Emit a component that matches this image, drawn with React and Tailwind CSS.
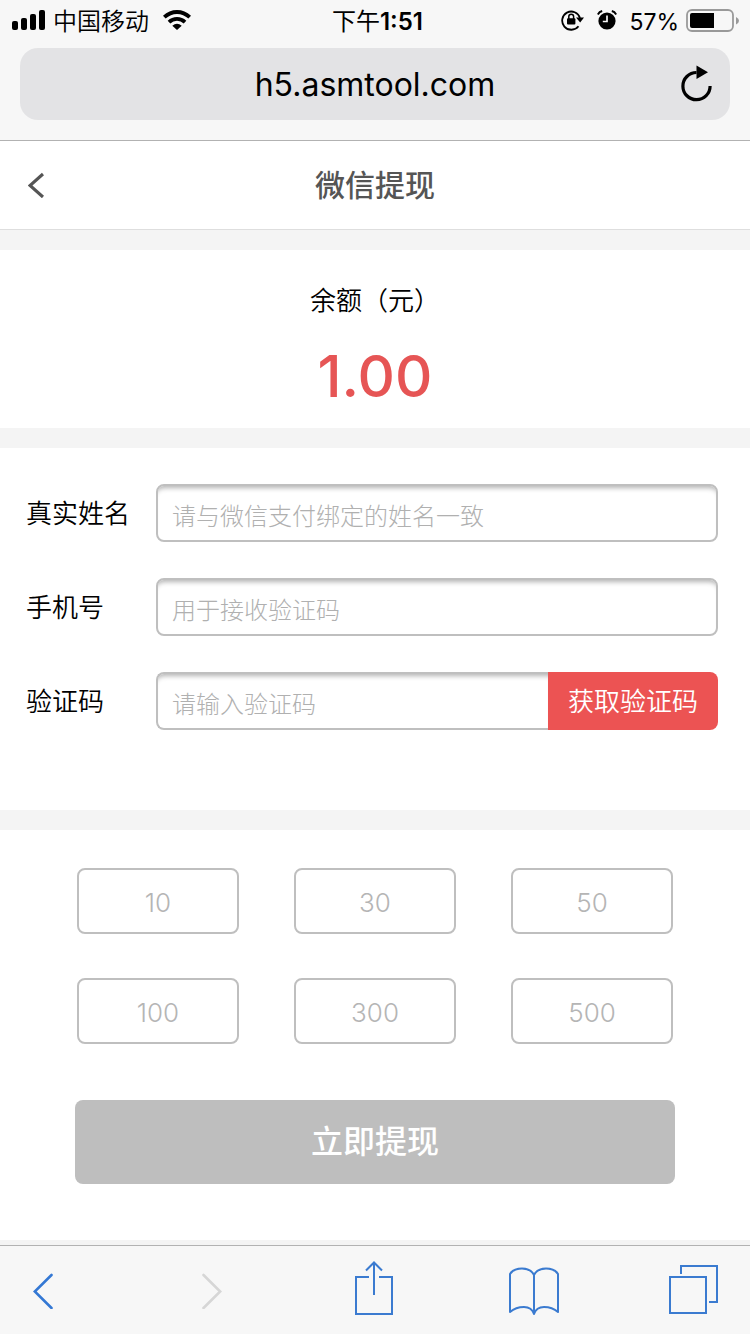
const fields = [
  { id: "name", label: "真实姓名", placeholder: "请与微信支付绑定的姓名一致" },
  { id: "phone", label: "手机号", placeholder: "用于接收验证码" },
  { id: "code", label: "验证码", placeholder: "请输入验证码", action: "获取验证码" },
];
const amounts = [10, 30, 50, 100, 300, 500];

function StatusBar() {
  return (
    <div className="grid h-10 grid-cols-[1fr_auto_1fr] items-center pr-[11px] pl-3 text-2xl leading-10 text-black">
      <div className="flex items-center">
        <svg width="33" height="22" viewBox="0 0 33 22" aria-hidden="true">
          <rect x="0" y="11" width="6" height="9" rx="2" />
          <rect x="9" y="8" width="6" height="12" rx="2" />
          <rect x="18" y="4" width="6" height="16" rx="2" />
          <rect x="27" y="0" width="6" height="20" rx="2" />
        </svg>
        <span className="ml-2 pt-0.5 font-[350]">中国移动</span>
        <svg className="ml-3.5" width="28" height="22" viewBox="0 0 28 22" aria-hidden="true">
          <g fill="none" stroke="#000" strokeWidth="3.8">
            <path d="M1.3 7.2Q6.8 2 14 2T26.7 7.2" />
            <path d="M6 12.1Q9.4 8.9 14 8.9T22 12.1" />
          </g>
          <path d="M9.3 15.7Q14 12 18.7 15.7L14 20Z" />
        </svg>
      </div>
      <div className="pt-0.5 pl-1 font-semibold">
        <span className="font-normal">下午</span>1:51
      </div>
      <div className="flex items-center justify-end">
        <svg width="24" height="24" viewBox="0 0 24 24" aria-hidden="true">
          <path d="M17.5 17.2A9.1 9.1 0 1 1 19 9" fill="none" stroke="#000" strokeWidth="1.8" />
          <path d="M15 8.6H23L19.2 13.4Z" />
          <rect x="6" y="9.2" width="8.4" height="6.2" rx="1" />
          <path d="M7.8 10V7.6a2.4 2.4 0 0 1 4.8 0v2.4" fill="none" stroke="#000" strokeWidth="1.5" />
        </svg>
        <svg className="ml-3" width="20" height="22" viewBox="0 0 20 22" aria-hidden="true">
          <circle cx="10" cy="11" r="8.6" />
          <path d="M.8 4.5Q2.3 1.7 5.2 1M19.2 4.5Q17.7 1.7 14.8 1" fill="none" stroke="#000" strokeWidth="2" />
          <path d="M10 5.5V11.5H5.8" fill="none" stroke="#f7f7f7" strokeWidth="1.7" />
        </svg>
        <span className="ml-3 pt-0.5 text-[23px]">57%</span>
        <svg className="ml-[7px]" width="53" height="24" viewBox="0 0 53 24" aria-hidden="true">
          <rect x="1" y="1" width="46" height="21" rx="5" fill="none" stroke="#999" strokeWidth="1.8" />
          <path d="M4 6a2 2 0 0 1 2-2H28V19H6a2 2 0 0 1-2-2Z" />
          <path d="M50 8Q53 9.5 53 11.7T50 15.5Z" fill="#999" />
        </svg>
      </div>
    </div>
  );
}

function AddressBar() {
  return (
    <div className="mx-5 mt-2 mb-5 grid h-[72px] grid-cols-[1fr_auto_1fr] items-center rounded-[18px] bg-[#e3e3e5] px-4">
      <span />
      <span className="pt-0.5 text-[32px] leading-[70px] text-black">h5.asmtool.com</span>
      <button type="button" aria-label="刷新" className="justify-self-end">
        <svg width="34" height="38" viewBox="0 0 34 38" aria-hidden="true">
          <path d="M16.5 7.5A13.6 13.6 0 1 0 30.1 21" fill="none" stroke="#000" strokeWidth="3.2" />
          <path d="M16.5 0.5L28 7.2L16.5 14Z" />
        </svg>
      </button>
    </div>
  );
}

function Toolbar() {
  return (
    <nav className="flex h-[89px] items-center justify-between border-t border-[#b2b2b2] bg-[#f7f7f7] pr-8 pl-[33px]">
      <button type="button" aria-label="后退" className="w-[42px]">
        <svg width="20" height="38" viewBox="0 0 20 38" fill="none" stroke="#3478d4" strokeWidth="2.6" strokeLinecap="round">
          <path d="M18.5 4L1.8 20.5L18.5 37" />
        </svg>
      </button>
      <button type="button" aria-label="前进" disabled className="flex w-[58px] justify-center">
        <svg width="20" height="38" viewBox="0 0 20 38" fill="none" stroke="#d6d6d6" strokeWidth="2.6" strokeLinecap="round">
          <path d="M1.5 4L18.2 20.5L1.5 37" />
        </svg>
      </button>
      <button type="button" aria-label="分享" className="flex w-[50px] justify-center">
        <svg width="38" height="58" viewBox="0 0 38 58" fill="none" stroke="#3b7bd0" strokeWidth="2">
          <path d="M14 16H1V53H37V16H24M19 34V1M11 9.5L19 1.5L27 9.5" />
        </svg>
      </button>
      <button type="button" aria-label="书签" className="flex w-[54px] justify-center">
        <svg width="50" height="50" viewBox="0 0 50 50" fill="none" stroke="#3b7bd0" strokeWidth="2" strokeLinejoin="round">
          <path d="M25 10C23 6 18 3.5 13 3.5C8 3.5 3 5.5 1 9V47C5 43.5 10 42 15 42C20 42 23.5 44.5 25 49C26.5 44.5 30 42 35 42C40 42 45 43.5 49 47V9C47 5.5 42 3.5 37 3.5C32 3.5 27 6 25 10ZM25 10V49" />
        </svg>
      </button>
      <button type="button" aria-label="标签页" className="flex w-[49px] justify-center">
        <svg width="49" height="50" viewBox="0 0 49 50" fill="none" stroke="#3b7bd0" strokeWidth="2">
          <path d="M1 12H37V48H1ZM12 9V1H48V37H40" />
        </svg>
      </button>
    </nav>
  );
}

export default function App() {
  return (
    <div className="flex min-h-screen flex-col bg-[#f4f4f4] font-['Inter','Noto_Sans_CJK_SC',sans-serif]">
      <div className="border-b border-[#b2b2b2] bg-[#f7f7f7]">
        <StatusBar />
        <AddressBar />
      </div>

      <header className="grid h-[89px] grid-cols-[1fr_auto_1fr] items-center border-b border-[#dedede] bg-white px-7">
        <button type="button" aria-label="返回" className="justify-self-start">
          <svg width="16" height="26" viewBox="0 0 16 26" fill="none" stroke="#555" strokeWidth="3.2">
            <path d="M15 2L2 13.5L15 25" />
          </svg>
        </button>
        <h1 className="text-3xl leading-10 font-medium text-[#555]">微信提现</h1>
      </header>

      <main className="mt-5 flex grow flex-col gap-5">
        <section className="bg-white pt-[31px] pb-[13px] text-center">
          <h2 className="text-[26px] leading-10 font-[350] text-black">余额（元）</h2>
          <p className="mt-4 text-[58px] leading-[78px] font-medium text-[#e65555]">1.00</p>
        </section>

        <form className="flex flex-col gap-9 bg-white pt-9 pr-8 pb-20 pl-[26px]">
          {fields.map((f) => (
            <div key={f.id} className="flex h-[58px] items-center">
              <label htmlFor={f.id} className="w-[130px] shrink-0 pt-0.5 text-[26px] leading-[58px] font-[350] text-black">
                {f.label}
              </label>
              <div className="flex h-full min-w-0 grow">
                <input
                  id={f.id}
                  type="text"
                  placeholder={f.placeholder}
                  className={
                    "h-full min-w-0 grow border-2 border-[#bfbfbf] bg-white px-3.5 pt-1.5 text-2xl font-light shadow-[inset_0_6px_5px_-4px_rgba(0,0,0,0.3)] outline-none placeholder:text-[#b0b0b0] " +
                    (f.action ? "rounded-l-lg border-r-0" : "rounded-lg")
                  }
                />
                {f.action && (
                  <button type="button" className="w-[170px] shrink-0 rounded-r-lg bg-[#ec5353] text-[26px] font-[350] text-white">
                    {f.action}
                  </button>
                )}
              </div>
            </div>
          ))}
        </form>

        <section className="mb-[5px] grow bg-white px-[75px] pt-[38px] pb-14">
          <div className="grid grid-cols-3 gap-x-[55px] gap-y-11 px-0.5">
            {amounts.map((n) => (
              <button key={n} type="button" className="h-[66px] rounded-lg border-2 border-[#bfbfbf] pt-0.5 text-[26px] font-light text-[#b5b5b5]">
                {n}
              </button>
            ))}
          </div>
          <button type="button" className="mt-14 h-[84px] w-full rounded-lg bg-[#bebebe] text-[32px] font-medium text-white">
            立即提现
          </button>
        </section>
      </main>

      <Toolbar />
    </div>
  );
}
